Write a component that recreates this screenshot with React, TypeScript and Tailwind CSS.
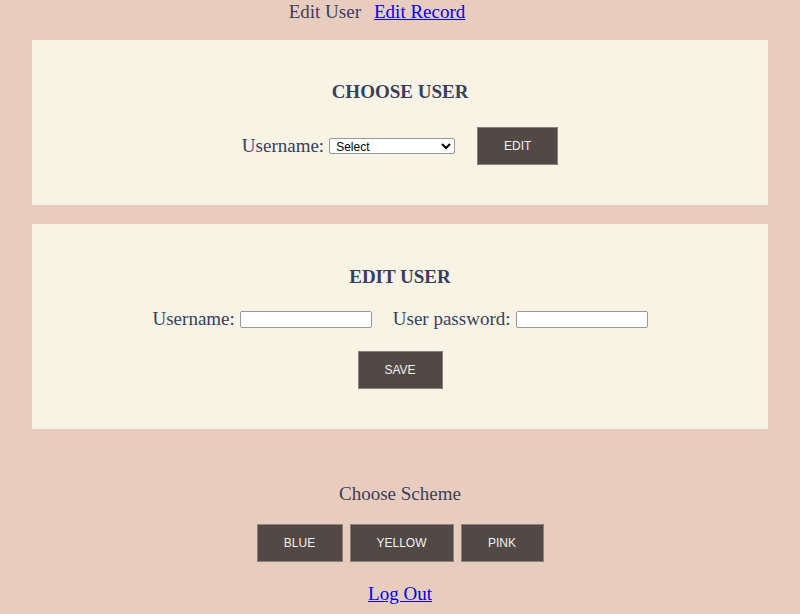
import React from 'react';

const serif = "font-['Liberation_Serif','Times_New_Roman',serif]";

const Btn: React.FC<{ label: string; w: string }> = ({ label, w }) => (
  <button
    className={`${w} h-[38px] bg-[#524845] text-[#f4f1ee] text-[12px] font-['Liberation_Sans',Arial,sans-serif] border border-[#8a807c] uppercase`}
  >
    {label}
  </button>
);

const App: React.FC = () => {
  return (
    <div className={`w-[800px] h-[614px] bg-[#e8cdbe] text-[#3a3e5c] ${serif} text-[19px] leading-[22px] overflow-hidden`}>
      {/* top nav */}
      <div className="h-[40px] flex justify-center items-start pt-[1px] pr-[46px] gap-[13px]">
        <span>Edit User</span>
        <a href="#" className="text-[#0000ee] underline">Edit Record</a>
      </div>

      {/* choose user */}
      <div className="mx-[32px] w-[736px] h-[165px] bg-[#f7f4e6] flex flex-col items-center pt-[41px]">
        <h2 className="font-bold text-[19px]">CHOOSE USER</h2>
        <div className="flex items-center mt-[24px]">
          <span className="mr-[5px]">Username:</span>
          <select className="w-[126px] h-[16px] bg-white border border-[#999] rounded-[2px] text-[12px] font-['Liberation_Sans',Arial,sans-serif] text-black pl-[2px] leading-none">
            <option>Select</option>
          </select>
          <div className="ml-[22px]">
            <Btn label="EDIT" w="w-[81px]" />
          </div>
        </div>
      </div>

      {/* edit user */}
      <div className="mx-[32px] mt-[19px] w-[736px] h-[205px] bg-[#f7f4e6] flex flex-col items-center pt-[42px]">
        <h2 className="font-bold text-[19px]">EDIT USER</h2>
        <div className="flex items-center mt-[20px]">
          <span className="mr-[5px]">Username:</span>
          <input className="w-[132px] h-[17px] bg-white border border-[#999] rounded-[2px]" />
          <span className="ml-[21px] mr-[5px]">User password:</span>
          <input className="w-[132px] h-[17px] bg-white border border-[#999] rounded-[2px]" />
        </div>
        <div className="mt-[21px]">
          <Btn label="SAVE" w="w-[85px]" />
        </div>
      </div>

      {/* scheme */}
      <div className="flex flex-col items-center mt-[54px]">
        <span>Choose Scheme</span>
        <div className="flex gap-[7px] mt-[19px]">
          <Btn label="BLUE" w="w-[86px]" />
          <Btn label="YELLOW" w="w-[104px]" />
          <Btn label="PINK" w="w-[83px]" />
        </div>
        <a href="#" className="text-[#0000ee] underline mt-[21px]">Log Out</a>
      </div>
    </div>
  );
};

export default App;
